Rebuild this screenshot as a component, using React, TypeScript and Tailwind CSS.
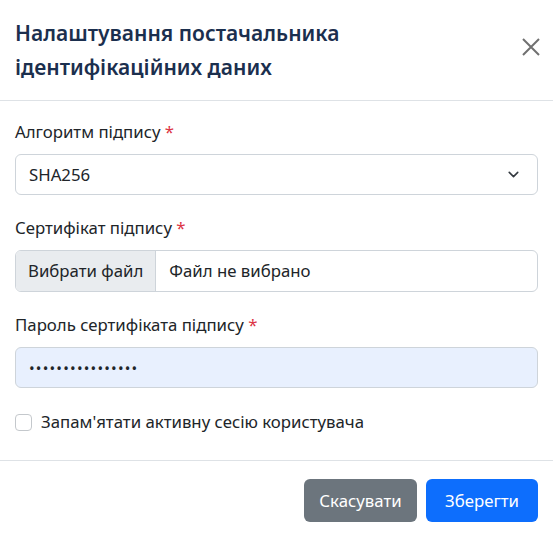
import { ChevronDown } from "lucide-react"

function Label({ text }: { text: string }) {
  return (
    <label className="block text-[16.8px] leading-[26px] text-[#212529] mb-[9px]">
      {text} <span className="text-[#dc3545]">*</span>
    </label>
  )
}

export default function App() {
  return (
    <div
      className="w-[553px] h-[536px] overflow-hidden bg-white flex flex-col"
      style={{ fontFamily: '"Noto Sans", "Open Sans", sans-serif' }}
    >
      {/* header */}
      <div className="flex items-start justify-between px-[15px] py-[16px] border-b border-[#dee2e6]">
        <h5 className="text-[21px] leading-[34px] font-semibold text-[#1b2f4e] w-[400px]">
          Налаштування постачальника ідентифікаційних даних
        </h5>
        <button className="mt-[22px] mr-[-2px] text-[#707070]">
          <svg width="18" height="18" viewBox="0 0 18 18" fill="none" stroke="currentColor" strokeWidth="2">
            <path d="M1 1L17 17M17 1L1 17" />
          </svg>
        </button>
      </div>

      {/* body */}
      <div className="px-[15px] pt-[18px] pb-[25px]">
        <Label text="Алгоритм підпису" />
        <div className="flex items-center justify-between h-[41px] border border-[#ced4da] rounded-[6px] pl-[13px] pr-[15px] text-[16.8px] text-[#212529]">
          <span>SHA256</span>
          <ChevronDown className="h-[17px] w-[17px] text-[#343a40]" strokeWidth={2.2} />
        </div>

        <div className="mt-[20px]">
          <Label text="Сертифікат підпису" />
          <div className="flex h-[42px] border border-[#ced4da] rounded-[6px] overflow-hidden text-[16.8px] text-[#212529]">
            <div className="flex items-center bg-[#e9ecef] border-r border-[#ced4da] px-[12px]">Вибрати файл</div>
            <div className="flex items-center px-[13px]">Файл не вибрано</div>
          </div>
        </div>

        <div className="mt-[20px]">
          <Label text="Пароль сертифіката підпису" />
          <input
            type="password"
            readOnly
            defaultValue="passwordpassword"
            className="block w-full h-[41px] border border-[#ced4da] rounded-[6px] bg-[#e8f0fe] px-[13px] text-[15px] tracking-[1.2px] text-[#212529] outline-none"
          />
        </div>

        <div className="mt-[21px] flex items-center gap-[9px] h-[26px]">
          <span className="block h-[17px] w-[17px] rounded-[4px] border border-[#c4c8cc] bg-white" />
          <span className="text-[16.8px] leading-[26px] text-[#212529]">
            Запам'ятати активну сесію користувача
          </span>
        </div>
      </div>

      {/* footer */}
      <div className="flex justify-end gap-[9px] px-[15px] pt-[18px] border-t border-[#dee2e6]">
        <button className="h-[43px] w-[113px] rounded-[6px] bg-[#6c757d] text-white text-[16.8px]">
          Скасувати
        </button>
        <button className="h-[43px] w-[112px] rounded-[6px] bg-[#0d6efd] text-white text-[16.8px]">
          Зберегти
        </button>
      </div>
    </div>
  )
}
